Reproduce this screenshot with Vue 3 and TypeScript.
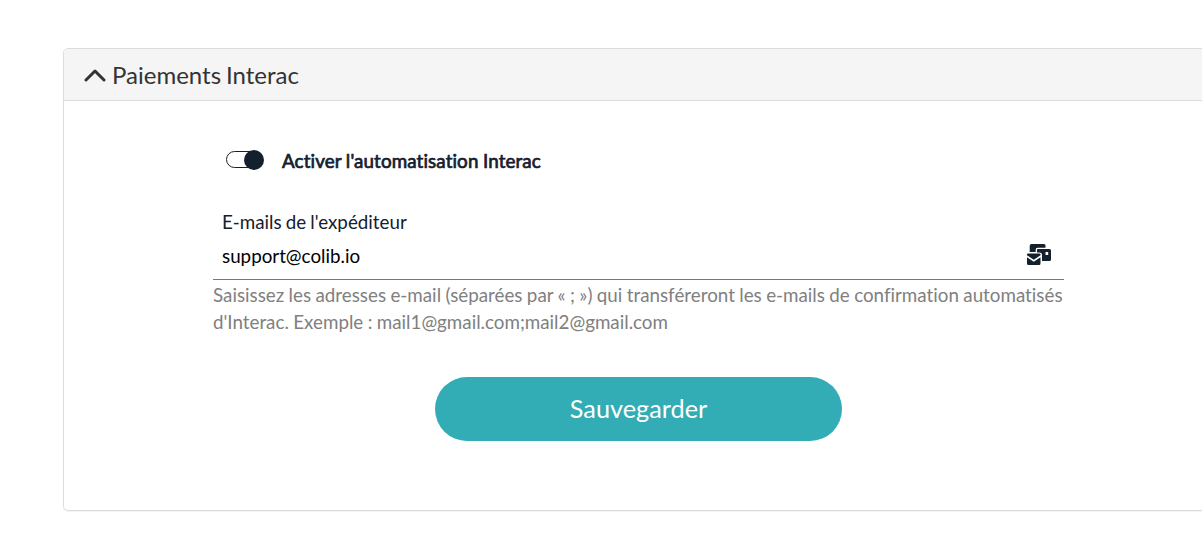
<script setup lang="ts">
import { ref } from 'vue'

const enabled = ref<boolean>(true)
const emails = ref<string>('support@colib.io')
</script>

<template>
  <main class="page">
    <section class="card">
      <header class="card-header">
        <svg class="chevron" viewBox="0 0 22 14"><path d="M2 12 11 3l9 9" /></svg>
        <h1>Paiements Interac</h1>
      </header>
      <div class="card-body">
        <div class="switch-row">
          <button class="switch" role="switch" :aria-checked="enabled" @click="enabled = !enabled">
            <svg viewBox="0 0 40 22"><rect x="1.5" y="2.5" width="36" height="16" rx="8" /><circle :cx="enabled ? 29 : 10" cy="11" r="10" /></svg>
          </button>
          <span class="switch-label">Activer l'automatisation Interac</span>
        </div>
        <div class="field">
          <label for="emails">E-mails de l'expéditeur</label>
          <div class="input-row">
            <input id="emails" v-model="emails" type="text" />
            <svg class="mail" viewBox="0 0 25 21">
              <path d="M4.5 0H17Q18.5 0 18.5 1.5V3.7H10.5Q8.7 3.7 8.7 5.5V8H2.7V1.8Q2.7 0 4.5 0Z" />
              <path fill-rule="evenodd" d="M11 5H22.5Q24 5 24 6.5V15.5Q24 17 22.5 17H15V11Q15 8.5 12.5 8.5H10V6Q10 5 11 5ZM18.5 8V11H21.2V8Z" />
              <path d="M0 11.2V10.5Q0 9.5 1 9.5H12.5Q13.5 9.5 13.5 10.5V11.2L6.75 15.8Z" />
              <path d="M0 13.2V19.5Q0 21 1.5 21H12Q13.5 21 13.5 19.5V13.2L6.75 17.8Z" />
            </svg>
          </div>
        </div>
        <p class="hint">Saisissez les adresses e-mail (séparées par « ; ») qui transféreront les e-mails de confirmation automatisés d'Interac. Exemple : mail1@gmail.com;mail2@gmail.com</p>
        <button class="save">Sauvegarder</button>
      </div>
    </section>
  </main>
</template>

<style>
body { background: #fff; overflow: hidden; }
</style>
<style scoped>
.page { padding: 48px 0 0 63px; height: 553px; box-sizing: border-box; overflow: hidden; font-family: Lato, sans-serif; font-variant-ligatures: none; color: #14202e; }
.card { width: 1151px; height: 463px; box-sizing: border-box; border: 1px solid #dcdcdc; border-radius: 5px; overflow: hidden; box-shadow: 0 1px 1px rgba(0, 0, 0, .05); }
.card-header { height: 51px; display: flex; align-items: center; gap: 6px; padding-left: 20px; background: #f5f5f5; border-bottom: 1px solid #dcdcdc; }
.chevron { width: 22px; height: 14px; fill: none; stroke: #333; stroke-width: 3; stroke-linecap: round; stroke-linejoin: round; }
h1 { margin: 0; font-size: 24px; font-weight: 400; line-height: 36px; word-spacing: -1.2px; color: #333; }
.card-body { width: 851px; padding: 46px 0 0 149px; }
.switch-row { display: flex; height: 26px; align-items: center; padding-left: 12px; gap: 17px; }
.switch { width: 40px; height: 22px; padding: 0; border: 0; background: none; }
.switch svg { display: block; width: 40px; height: 22px; fill: #14202e; }
.switch rect { fill: #fff; stroke: #14202e; }
.switch-label { font-size: 18.8px; letter-spacing: .12px; word-spacing: -.4px; -webkit-text-stroke: .7px #14202e; }
.field { margin-top: 35px; height: 71px; border-bottom: 1px solid #777; }
label { display: block; padding-left: 9px; font-size: 18.8px; line-height: 27px; word-spacing: -.7px; }
.input-row { display: flex; align-items: center; padding: 0 12px 0 9px; height: 40px; }
input { flex: 1; border: 0; padding: 0; outline: 0; font: 18.8px Lato, sans-serif; color: #000; }
.mail { width: 25px; height: 21px; margin-top: -2px; fill: #14202e; }
.hint { margin: 1px 0 0; font-size: 18.8px; line-height: 27px; word-spacing: -.4px; color: #808080; }
.save { display: block; width: 407px; height: 64px; margin: 42px auto 0; padding: 0 0 2px; border: 0; border-radius: 32px; background: #32adb5; color: #fff; font: 25.3px Lato, sans-serif; }
</style>
